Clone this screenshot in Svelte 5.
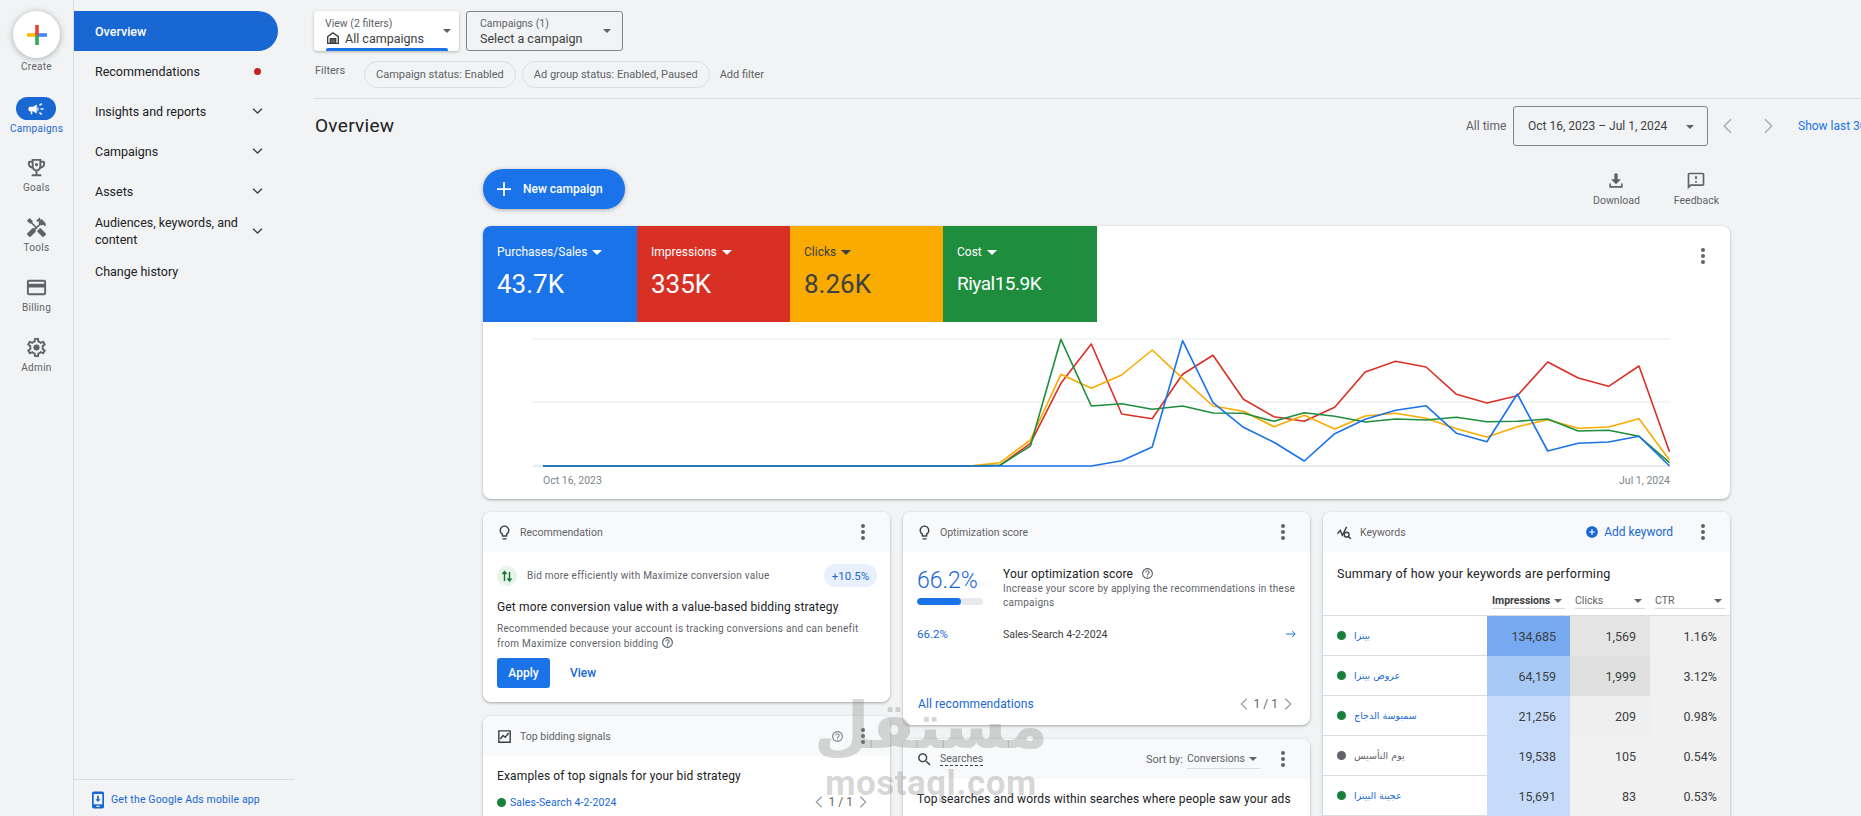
<script>
  const railItems = [
    { label: 'Goals', icon: 'goals' },
    { label: 'Tools', icon: 'tools' },
    { label: 'Billing', icon: 'billing' },
    { label: 'Admin', icon: 'admin' }
  ];

  const navItems = [
    { label: 'Recommendations', dot: true },
    { label: 'Insights and reports', chevron: true },
    { label: 'Campaigns', chevron: true },
    { label: 'Assets', chevron: true },
    { label: 'Audiences, keywords, and content', chevron: true, tight: true },
    { label: 'Change history' }
  ];

  const tiles = [
    { label: 'Purchases/Sales', value: '43.7K', cls: 'blue' },
    { label: 'Impressions', value: '335K', cls: 'red' },
    { label: 'Clicks', value: '8.26K', cls: 'yellow' },
    { label: 'Cost', value: 'Riyal15.9K', cls: 'green', small: true }
  ];

  // y readings per step, right part of the chart; everything before sits on the baseline
  const series = [
    { color: '#d93025', w: 1.6, ys: [436, 370, 190, 72, 282, 296, 163, 106, 238, 290, 304, 262, 156, 124, 141, 223, 249, 227, 126, 174, 199, 138, 395] },
    { color: '#f9ab00', w: 1.6, ys: [428, 360, 163, 205, 165, 90, 175, 258, 274, 320, 286, 327, 288, 280, 295, 326, 351, 320, 299, 325, 321, 296, 420] },
    { color: '#1e8e3e', w: 1.6, ys: [436, 378, 58, 258, 251, 268, 258, 279, 280, 304, 278, 289, 306, 297, 300, 292, 305, 304, 297, 333, 331, 349, 428] },
    { color: '#1a73e8', w: 1.6, ys: [438, 438, 438, 438, 422, 381, 62, 248, 322, 367, 423, 341, 298, 271, 257, 340, 365, 222, 393, 370, 366, 349, 438] }
  ];

  function points(ys) {
    const step = 30.43;
    const pts = ys.map((v, i) => `${(1000 + i * step).toFixed(1)},${(320 + v / 3).toFixed(1)}`);
    return `543,466 969,466 ${pts.join(' ')}`;
  }

  const keywords = [
    { name: 'بيتزا', paused: false, imp: '134,685', clicks: '1,569', ctr: '1.16%', impBg: '#76a9f0', clicksBg: '#e4e4e4' },
    { name: 'عروض بيتزا', paused: false, imp: '64,159', clicks: '1,999', ctr: '3.12%', impBg: '#a7c9f6', clicksBg: '#e0e0e0' },
    { name: 'سمبوسة الدجاج', paused: false, imp: '21,256', clicks: '209', ctr: '0.98%', impBg: '#c6dbf9', clicksBg: '#efefef' },
    { name: 'يوم التأسيس', paused: true, imp: '19,538', clicks: '105', ctr: '0.54%', impBg: '#c6dbf9', clicksBg: '#f1f1f1' },
    { name: 'عجينة البيتزا', paused: false, imp: '15,691', clicks: '83', ctr: '0.53%', impBg: '#c6dbf9', clicksBg: '#f1f1f1' }
  ];
</script>

{#snippet more()}
  <svg class="more" viewBox="0 0 24 24"><circle cx="12" cy="4" r="2.7"/><circle cx="12" cy="12" r="2.7"/><circle cx="12" cy="20" r="2.7"/></svg>
{/snippet}

{#snippet help(size)}
  <svg class="help" width={size} height={size} viewBox="0 0 24 24"><path d="M11 18h2v-2h-2v2zm1-16C6.48 2 2 6.48 2 12s4.48 10 10 10 10-4.48 10-10S17.52 2 12 2zm0 18c-4.41 0-8-3.59-8-8s3.59-8 8-8 8 3.59 8 8-3.59 8-8 8zm0-14c-2.21 0-4 1.79-4 4h2c0-1.1.9-2 2-2s2 .9 2 2c0 2-3 1.75-3 5h2c0-2.25 3-2.5 3-5 0-2.21-1.79-4-4-4z"/></svg>
{/snippet}

{#snippet bulb()}
  <svg class="head-icon" viewBox="0 0 24 24"><path d="M9 21c0 .55.45 1 1 1h4c.55 0 1-.45 1-1v-1H9v1zm3-19C8.14 2 5 5.14 5 9c0 2.38 1.19 4.47 3 5.74V17c0 .55.45 1 1 1h6c.55 0 1-.45 1-1v-2.26c1.81-1.27 3-3.36 3-5.74 0-3.86-3.14-7-7-7zm2.85 11.1l-.85.6V16h-4v-2.3l-.85-.6C7.8 12.16 7 10.63 7 9c0-2.76 2.24-5 5-5s5 2.24 5 5c0 1.63-.8 3.16-2.15 4.1z"/></svg>
{/snippet}

{#snippet pager()}
  <span class="pager">
    <svg viewBox="0 0 24 24"><path d="M16 4l-8 8 8 8"/></svg>
    <span>1 / 1</span>
    <svg viewBox="0 0 24 24"><path d="M8 4l8 8-8 8"/></svg>
  </span>
{/snippet}

<div class="page">
  <aside class="rail">
    <div class="create">
      <div class="create-btn">
        <svg width="20" height="20" viewBox="0 0 20 20">
          <rect x="0" y="8.2" width="10" height="3.6" fill="#fbbc04"/>
          <rect x="10" y="8.2" width="10" height="3.6" fill="#4285f4"/>
          <rect x="8.2" y="0" width="3.6" height="10" fill="#ea4335"/>
          <rect x="8.2" y="10" width="3.6" height="10" fill="#34a853"/>
        </svg>
      </div>
      <span class="rail-label">Create</span>
    </div>
    <div class="rail-item active">
      <span class="rail-pill">
        <svg viewBox="0 0 24 24"><path d="M18 11v2h4v-2h-4zm-2 6.61c.96.71 2.21 1.65 3.2 2.39.4-.53.8-1.07 1.2-1.6-.99-.74-2.24-1.68-3.2-2.4-.4.54-.8 1.08-1.2 1.61zM20.4 5.6c-.4-.53-.8-1.07-1.2-1.6-.99.74-2.24 1.68-3.2 2.4.4.53.8 1.07 1.2 1.6.96-.72 2.21-1.65 3.2-2.4zM4 9c-1.1 0-2 .9-2 2v2c0 1.1.9 2 2 2h1v4h2v-4h1l5 3V6L8 9H4zm11.5 3c0-1.33-.58-2.53-1.5-3.35v6.69c.92-.81 1.5-2.01 1.5-3.34z"/></svg>
      </span>
      <span class="rail-label">Campaigns</span>
    </div>
    {#each railItems as item}
      <div class="rail-item">
        <span class="rail-icon">
          <svg viewBox="0 0 24 24" width="23" height="23">
            {#if item.icon === 'goals'}
              <path fill-rule="evenodd" d="M19 5h-2V3H7v2H5c-1.1 0-2 .9-2 2v1c0 2.55 1.92 4.63 4.39 4.94.63 1.5 1.98 2.63 3.61 2.96V19H7v2h10v-2h-4v-3.1c1.63-.33 2.98-1.46 3.61-2.96C19.08 12.63 21 10.55 21 8V7c0-1.1-.9-2-2-2zM5 8V7h2v3.82C5.84 10.4 5 9.3 5 8zm14 0c0 1.3-.84 2.4-2 2.82V7h2v1zM15 5v6c0 1.65-1.35 3-3 3s-3-1.35-3-3V5h6z"/>
              <circle cx="12" cy="9" r="1.6"/>
            {:else if item.icon === 'tools'}
              <path d="M21.67 18.17l-5.3-5.3h-.99l-2.54 2.54v.99l5.3 5.3c.39.39 1.02.39 1.41 0l2.12-2.12c.39-.38.39-1.02 0-1.41z"/>
              <path d="M17.34 10.19l1.41-1.41 2.12 2.12c1.17-1.17 1.17-3.07 0-4.24l-3.54-3.54-1.41 1.41V2.22l-.7-.71-3.54 3.54.71.71h2.83l-1.41 1.41 1.06 1.06-2.89 2.89-4.13-4.13V5.06L4.83 2.04 2 4.87 5.03 7.9h1.41l4.13 4.13-.85.85H7.6l-5.3 5.3c-.39.39-.39 1.02 0 1.41l2.12 2.12c.39.39 1.02.39 1.41 0l5.3-5.3v-2.12l5.15-5.15 1.06 1.05z"/>
            {:else if item.icon === 'billing'}
              <path d="M20 4H4c-1.11 0-1.99.89-1.99 2L2 18c0 1.11.89 2 2 2h16c1.11 0 2-.89 2-2V6c0-1.11-.89-2-2-2zm0 14H4v-6h16v6zm0-10H4V6h16v2z"/>
            {:else}
              <path d="M19.43 12.98c.04-.32.07-.64.07-.98 0-.34-.03-.66-.07-.98l2.11-1.65c.19-.15.24-.42.12-.64l-2-3.46c-.09-.16-.26-.25-.44-.25-.06 0-.12.01-.17.03l-2.49 1c-.52-.4-1.08-.73-1.69-.98l-.38-2.65C14.46 2.18 14.25 2 14 2h-4c-.25 0-.46.18-.49.42l-.38 2.65c-.61.25-1.17.59-1.69.98l-2.49-1c-.06-.02-.12-.03-.18-.03-.17 0-.34.09-.43.25l-2 3.46c-.13.22-.07.49.12.64l2.11 1.65c-.04.32-.07.65-.07.98 0 .33.03.66.07.98l-2.11 1.65c-.19.15-.24.42-.12.64l2 3.46c.09.16.26.25.44.25.06 0 .12-.01.17-.03l2.49-1c.52.4 1.08.73 1.69.98l.38 2.65c.03.24.24.42.49.42h4c.25 0 .46-.18.49-.42l.38-2.65c.61-.25 1.17-.59 1.69-.98l2.49 1c.06.02.12.03.18.03.17 0 .34-.09.43-.25l2-3.46c.12-.22.07-.49-.12-.64l-2.11-1.65zm-1.98-1.71c.04.31.05.52.05.73 0 .21-.02.43-.05.73l-.14 1.13.89.7 1.08.84-.7 1.21-1.27-.51-1.04-.42-.9.68c-.43.32-.84.56-1.25.73l-1.06.43-.16 1.13-.2 1.35h-1.4l-.19-1.35-.16-1.13-1.06-.43c-.43-.18-.83-.41-1.23-.71l-.91-.7-1.06.43-1.27.51-.7-1.21 1.08-.84.89-.7-.14-1.13c-.03-.31-.05-.54-.05-.74s.02-.43.05-.73l.14-1.13-.89-.7-1.08-.84.7-1.21 1.27.51 1.04.42.9-.68c.43-.32.84-.56 1.25-.73l1.06-.43.16-1.13.2-1.35h1.39l.19 1.35.16 1.13 1.06.43c.43.18.83.41 1.23.71l.91.7 1.06-.43 1.27-.51.7 1.21-1.07.85-.89.7.14 1.13z"/>
              <circle cx="12" cy="12" r="3.2"/>
            {/if}
          </svg>
        </span>
        <span class="rail-label">{item.label}</span>
      </div>
    {/each}
  </aside>

  <nav class="side">
    <div class="nav-list">
      <div class="nav-item current">Overview</div>
      {#each navItems as item}
        <div class="nav-item" class:tight={item.tight}>
          <span class="nav-text">{item.label}</span>
          {#if item.dot}<span class="red-dot"></span>{/if}
          {#if item.chevron}
            <svg class="chev" viewBox="0 0 12 8"><path d="M1.2 1.5L6 6.2l4.8-4.7"/></svg>
          {/if}
        </div>
      {/each}
    </div>
    <div class="app-link">
      <svg width="12" height="18" viewBox="0 0 14 20"><path fill="#1967d2" d="M2 0h10a2 2 0 0 1 2 2v16a2 2 0 0 1-2 2H2a2 2 0 0 1-2-2V2a2 2 0 0 1 2-2z"/><rect x="2" y="3" width="10" height="12" fill="#f1f3f4"/><path fill="#1967d2" d="M6 5h2v4h2l-3 3.4L4 9h2z"/><rect x="5" y="16.6" width="4" height="1.4" fill="#f1f3f4"/></svg>
      <span>Get the Google Ads mobile app</span>
    </div>
  </nav>

  <main class="main">
    <div class="pickers">
      <div class="picker view">
        <span class="pick-label">View (2 filters)</span>
        <span class="pick-value">
          <svg width="16" height="16" viewBox="0 0 24 24"><path fill="#3c4043" fill-rule="evenodd" d="M12 3L3 9.5V21h18V9.5L12 3zm0 2.6l7 5V19h-2v-7H7v7H5v-8.4l7-5z"/><rect x="9" y="14" width="6" height="5" fill="#5f6368"/></svg>
          All campaigns
        </span>
        <span class="caret"></span>
        <span class="view-bar"></span>
      </div>
      <div class="picker outline">
        <span class="pick-label">Campaigns (1)</span>
        <span class="pick-value">Select a campaign</span>
        <span class="caret"></span>
      </div>
    </div>

    <div class="filters">
      <span class="filters-label">Filters</span>
      <span class="chip">Campaign status: Enabled</span>
      <span class="chip">Ad group status: Enabled, Paused</span>
      <span class="add-filter">Add filter</span>
    </div>

    <div class="title-row">
      <h1>Overview</h1>
      <div class="date-tools">
        <span class="all-time">All time</span>
        <div class="date-box">Oct 16, 2023 – Jul 1, 2024<span class="caret"></span></div>
        <svg class="date-arrow" viewBox="0 0 24 24"><path d="M16 3l-9 9 9 9"/></svg>
        <svg class="date-arrow" viewBox="0 0 24 24"><path d="M8 3l9 9-9 9"/></svg>
        <span class="show-last">Show last 30 days</span>
      </div>
    </div>

    <div class="content">
      <div class="action-row">
        <div class="new-campaign">
          <svg width="14" height="14" viewBox="0 0 16 16"><path d="M7 0h2v7h7v2H9v7H7V9H0V7h7z" fill="#fff"/></svg>
          New campaign
        </div>
        <div class="tools">
          <div class="tool">
            <svg viewBox="0 0 24 24" width="20" height="20"><path d="M10 3h4v7h4l-6 6-6-6h4zM4 15h2v3h12v-3h2v5H4z"/></svg>
            <span>Download</span>
          </div>
          <div class="tool">
            <svg viewBox="0 0 24 24" width="20" height="20"><path d="M20 2H4c-1.1 0-1.99.9-1.99 2L2 22l4-4h14c1.1 0 2-.9 2-2V4c0-1.1-.9-2-2-2zm0 14H5.17l-.59.59-.58.58V4h16v12zm-9-4h2v2h-2zm0-6h2v4h-2z"/></svg>
            <span>Feedback</span>
          </div>
        </div>
      </div>

      <section class="card chart-card">
        <div class="tiles">
          {#each tiles as t}
            <div class="tile {t.cls}">
              <span class="tile-label">{t.label}<i class="tile-caret"></i></span>
              <span class="tile-value" class:small={t.small}>{t.value}</span>
            </div>
          {/each}
          <span class="chart-more">{@render more()}</span>
        </div>
        <svg class="chart" viewBox="483 322 1247 177" width="1247" height="177">
          <line x1="533" x2="1670" y1="339" y2="339" stroke="#e8eaed"/>
          <line x1="533" x2="1670" y1="402" y2="402" stroke="#e8eaed"/>
          <line x1="533" x2="1670" y1="466" y2="466" stroke="#e8eaed" stroke-width="2"/>
          {#each series as s}
            <polyline points={points(s.ys)} fill="none" stroke={s.color} stroke-width={s.w} stroke-linejoin="round"/>
          {/each}
          <text x="543" y="484" class="axis">Oct 16, 2023</text>
          <text x="1670" y="484" class="axis" text-anchor="end">Jul 1, 2024</text>
        </svg>
      </section>

      <div class="columns">
        <div class="col">
          <section class="card rec">
            <header class="card-head">
              {@render bulb()}
              <span class="head-title">Recommendation</span>
              {@render more()}
            </header>
            <div class="rec-body">
              <div class="rec-line">
                <span class="swap">
                  <svg width="14" height="14" viewBox="0 0 14 14"><path d="M4.5 12V3M2.5 5l2-2.4 2 2.4" stroke="#137333" fill="none" stroke-width="1.4"/><path d="M9.5 3v9M7.5 9.5l2 2.4 2-2.4" stroke="#137333" fill="none" stroke-width="1.4"/></svg>
                </span>
                <span class="rec-line-text">Bid more efficiently with Maximize conversion value</span>
                <span class="uplift">+10.5%</span>
              </div>
              <div class="card-h">Get more conversion value with a value-based bidding strategy</div>
              <p class="rec-note">Recommended because your account is tracking conversions and can benefit from Maximize conversion bidding {@render help(13)}</p>
              <div class="rec-actions">
                <span class="apply">Apply</span>
                <span class="view-link">View</span>
              </div>
            </div>
          </section>
          <section class="card grow">
            <header class="card-head">
              <svg class="head-icon" viewBox="0 0 24 24"><path fill-rule="evenodd" d="M3 3h18v18H3zM5 5v14h14V5z"/><path d="M6 15.5l4-5 3 2.6 5-6" fill="none" stroke="#3c4043" stroke-width="2"/></svg>
              <span class="head-title">Top bidding signals</span>
              {@render help(13)}
              {@render more()}
            </header>
            <div class="signals">
              <div class="card-h">Examples of top signals for your bid strategy</div>
              <div class="signal-row">
                <span class="status-dot"></span>
                <span class="link">Sales-Search 4-2-2024</span>
                {@render pager()}
              </div>
            </div>
          </section>
        </div>

        <div class="col">
          <section class="card score">
            <header class="card-head">
              {@render bulb()}
              <span class="head-title">Optimization score</span>
              {@render more()}
            </header>
            <div class="score-body">
              <div class="score-top">
                <div class="score-num">
                  <span class="big-pct">66.2%</span>
                  <span class="bar"><span class="bar-fill" style="width: 66.2%"></span></span>
                </div>
                <div class="score-text">
                  <div class="card-h">Your optimization score <span class="q">{@render help(13)}</span></div>
                  <p class="rec-note">Increase your score by applying the recommendations in these campaigns</p>
                </div>
              </div>
              <div class="score-row">
                <span class="score-small">66.2%</span>
                <span class="score-camp">Sales-Search 4-2-2024</span>
                <svg width="10" height="10" viewBox="0 0 12 12"><path d="M0 6h11M7.5 2.5L11 6l-3.5 3.5" fill="none" stroke="#1a73e8" stroke-width="1.2"/></svg>
              </div>
              <div class="score-foot">
                <span class="link all">All recommendations</span>
                {@render pager()}
              </div>
            </div>
          </section>
          <section class="card grow">
            <header class="card-head">
              <svg class="head-icon search" viewBox="0 0 24 24"><path d="M15.5 14h-.79l-.28-.27C15.41 12.59 16 11.11 16 9.5 16 5.91 13.09 3 9.5 3S3 5.91 3 9.5 5.91 16 9.5 16c1.61 0 3.09-.59 4.23-1.57l.27.28v.79l5 4.99L20.49 19l-4.99-5zm-6 0C7.01 14 5 11.99 5 9.5S7.01 5 9.5 5 14 7.01 14 9.5 11.99 14 9.5 14z"/></svg>
              <span class="head-title dashed">Searches</span>
              <span class="sort">Sort by:</span>
              <span class="sort-select">Conversions<span class="caret"></span></span>
              {@render more()}
            </header>
            <div class="signals">
              <div class="card-h">Top searches and words within searches where people saw your ads</div>
            </div>
          </section>
        </div>

        <div class="col">
          <section class="card grow">
            <header class="card-head">
              <svg class="head-icon kw" viewBox="0 0 24 24"><path d="M2 14l4-5 3 7 6-12" fill="none" stroke="#3c4043" stroke-width="2"/><circle cx="15" cy="15" r="3.4" fill="none" stroke="#3c4043" stroke-width="2"/><path d="M17.5 17.5l3.5 3.5" stroke="#3c4043" stroke-width="2"/></svg>
              <span class="head-title">Keywords</span>
              <span class="add-kw">
                <svg width="14" height="14" viewBox="0 0 24 24"><path fill="#1967d2" d="M12 2C6.48 2 2 6.48 2 12s4.48 10 10 10 10-4.48 10-10S17.52 2 12 2zm5 11h-4v4h-2v-4H7v-2h4V7h2v4h4v2z"/></svg>
                Add keyword
              </span>
              {@render more()}
            </header>
            <div class="kw-title">Summary of how your keywords are performing</div>
            <div class="kw-table">
              <div class="kw-head">
                <span></span>
                <span class="kw-th strong">Impressions<span class="caret"></span></span>
                <span class="kw-th">Clicks<span class="caret"></span></span>
                <span class="kw-th">CTR<span class="caret"></span></span>
              </div>
              {#each keywords as k}
                <div class="kw-row">
                  <span class="kw-name">
                    {#if k.paused}
                      <span class="status-dot paused"></span>
                    {:else}
                      <span class="status-dot"></span>
                    {/if}
                    <span class="kw-link" class:paused-link={k.paused} dir="rtl">{k.name}</span>
                  </span>
                  <span class="num" style="background: {k.impBg}">{k.imp}</span>
                  <span class="num" style="background: {k.clicksBg}">{k.clicks}</span>
                  <span class="num ctr">{k.ctr}</span>
                </div>
              {/each}
            </div>
          </section>
        </div>
      </div>
    </div>
  </main>

  <div class="watermark" aria-hidden="true">
    <span class="wm-ar" dir="rtl">مستقل</span>
    <span class="wm-en">mostaql.com</span>
  </div>
</div>

<style>
  :global(html), :global(body) {
    margin: 0;
    overflow: hidden;
  }

  .page {
    position: relative;
    display: flex;
    width: 1861px;
    height: 816px;
    overflow: hidden;
    background: #f1f3f4;
    color: #3c4043;
    font-family: Roboto, "Liberation Sans", sans-serif;
    font-size: 12px;
  }

  /* icon rail */
  .rail {
    flex: 0 0 73px;
    border-right: 1px solid #dadce0;
    display: flex;
    flex-direction: column;
    align-items: center;
  }

  .rail svg {
    fill: #5f6368;
  }

  .create {
    display: flex;
    flex-direction: column;
    align-items: center;
    padding-top: 11px;
    height: 84px;
    box-sizing: border-box;
  }

  .create-btn {
    width: 47px;
    height: 47px;
    border-radius: 50%;
    background: #fff;
    box-shadow: 0 1px 6px rgba(60, 64, 67, 0.4);
    display: flex;
    align-items: center;
    justify-content: center;
    margin-bottom: 2px;
  }

  .rail-label {
    font-size: 10px;
    line-height: 14px;
    color: #5f6368;
    letter-spacing: 0.3px;
  }

  .rail-item {
    height: 60px;
    flex-shrink: 0;
    display: flex;
    flex-direction: column;
    align-items: center;
    gap: 1px;
    padding-top: 13px;
    box-sizing: border-box;
  }

  .rail-item.active {
    height: 58px;
    gap: 2px;
  }

  .rail-item.active .rail-label {
    color: #1967d2;
  }

  .rail-pill {
    width: 40px;
    height: 23px;
    border-radius: 12px;
    background: #1967d2;
    display: flex;
    align-items: center;
    justify-content: center;
  }

  .rail-pill svg {
    fill: #fff;
    width: 18px;
    height: 18px;
  }

  .rail-icon {
    height: 25px;
    display: flex;
    align-items: center;
    justify-content: center;
  }

  /* text nav */
  .side {
    flex: 0 0 220px;
    display: flex;
    flex-direction: column;
    justify-content: space-between;
  }

  .nav-list {
    padding-top: 11px;
  }

  .nav-item {
    width: 204px;
    height: 40px;
    box-sizing: border-box;
    padding: 0 15px 0 21px;
    display: flex;
    align-items: center;
    justify-content: space-between;
    font-size: 12.5px;
    color: #202124;
  }

  .nav-item.current {
    background: #1967d2;
    color: #fff;
    font-weight: 500;
    border-radius: 0 20px 20px 0;
  }

  .nav-item.tight {
    line-height: 17px;
  }

  .nav-text {
    max-width: 155px;
  }

  .red-dot {
    width: 7px;
    height: 7px;
    border-radius: 50%;
    background: #c5221f;
    margin-right: 2px;
  }

  .chev {
    width: 11px;
    height: 8px;
    fill: none;
    stroke: #3c4043;
    stroke-width: 1.5;
  }

  .app-link {
    height: 37px;
    box-sizing: border-box;
    border-top: 1px solid #dadce0;
    display: flex;
    align-items: center;
    gap: 7px;
    padding: 3px 0 0 18px;
    color: #1967d2;
    font-size: 10.5px;
    letter-spacing: 0.15px;
  }

  /* main column */
  .main {
    flex: 1;
    min-width: 0;
    padding-left: 20px;
  }

  .pickers {
    display: flex;
    gap: 7px;
    padding-top: 11px;
  }

  .picker {
    position: relative;
    height: 40px;
    box-sizing: border-box;
    display: flex;
    flex-direction: column;
    justify-content: center;
    border-radius: 3px;
    padding-top: 1px;
  }

  .picker.view {
    width: 145px;
    background: #fff;
    padding-left: 11px;
    box-shadow: 0 1px 3px rgba(60, 64, 67, 0.35);
  }

  .picker.outline {
    width: 157px;
    border: 1px solid #80868b;
    padding-left: 13px;
  }

  .pick-label {
    font-size: 10.5px;
    line-height: 13px;
    color: #5f6368;
  }

  .pick-value {
    display: flex;
    align-items: center;
    gap: 4px;
    font-size: 12.5px;
    line-height: 17px;
    color: #3c4043;
  }

  .caret {
    width: 0;
    height: 0;
    border-left: 4.5px solid transparent;
    border-right: 4.5px solid transparent;
    border-top: 4.5px solid #5f6368;
  }

  .picker .caret {
    position: absolute;
    right: 8px;
    top: 18px;
  }

  .picker.outline .caret {
    right: 11px;
    top: 17px;
  }

  .view-bar {
    position: absolute;
    left: 12px;
    right: 11px;
    bottom: 0;
    height: 3px;
    background: #1a73e8;
    border-radius: 2px 2px 0 0;
  }

  .filters {
    display: flex;
    align-items: center;
    height: 48px;
    border-bottom: 1px solid #dadce0;
    box-sizing: border-box;
    padding: 0 0 0 1px;
    font-size: 11px;
    color: #5f6368;
  }

  .filters-label {
    width: 49px;
    margin-top: -9px;
  }

  .chip {
    height: 27px;
    display: flex;
    align-items: center;
    border: 1px solid #dadce0;
    border-radius: 14px;
    padding: 0 11px;
    margin-right: 6px;
    box-sizing: border-box;
    color: #5f6368;
  }

  .add-filter {
    margin-left: 4px;
    color: #5f6368;
  }

  .title-row {
    height: 54px;
    display: flex;
    align-items: center;
    justify-content: space-between;
  }

  h1 {
    margin: -1px 0 0;
    padding-left: 1px;
    font-size: 19px;
    font-weight: 400;
    color: #202124;
    letter-spacing: 0.3px;
  }

  .date-tools {
    display: flex;
    align-items: center;
    flex: 0 0 395px;
    overflow: hidden;
    white-space: nowrap;
  }

  .date-tools > * {
    flex-shrink: 0;
  }

  .all-time {
    width: 47px;
    color: #5f6368;
  }

  .date-box {
    position: relative;
    width: 195px;
    height: 40px;
    box-sizing: border-box;
    border: 1px solid #80868b;
    border-radius: 3px;
    display: flex;
    align-items: center;
    padding-left: 14px;
    color: #3c4043;
  }

  .date-box .caret {
    position: absolute;
    right: 13px;
    top: 18px;
  }

  .date-arrow {
    width: 18px;
    height: 18px;
    fill: none;
    stroke: #aab2ba;
    stroke-width: 2.2;
    margin-left: 11px;
    margin-right: 11px;
  }

  .show-last {
    color: #1a73e8;
    margin-left: 10px;
  }

  .content {
    margin-left: 169px;
    width: 1247px;
  }

  .action-row {
    height: 73px;
    padding-top: 16px;
    box-sizing: border-box;
    display: flex;
    justify-content: space-between;
    align-items: flex-start;
  }

  .new-campaign {
    width: 142px;
    height: 40px;
    border-radius: 20px;
    background: #1a73e8;
    color: #fff;
    font-weight: 500;
    font-size: 12px;
    display: flex;
    align-items: center;
    gap: 12px;
    padding-left: 14px;
    box-sizing: border-box;
    box-shadow: 0 1px 4px rgba(60, 64, 67, 0.4);
  }

  .tools {
    display: flex;
    gap: 34px;
    margin-right: 11px;
    margin-top: 2px;
  }

  .tool {
    display: flex;
    flex-direction: column;
    align-items: center;
    gap: 3px;
    font-size: 10.5px;
    color: #5f6368;
  }

  .tool svg {
    fill: #5f6368;
  }

  /* cards */
  .card {
    background: #fff;
    border-radius: 8px;
    box-shadow: 0 1px 2px rgba(60, 64, 67, 0.3), 0 1px 3px 1px rgba(60, 64, 67, 0.1);
    overflow: hidden;
  }

  .chart-card {
    height: 273px;
  }

  .tiles {
    position: relative;
    display: flex;
    height: 96px;
  }

  .tile {
    width: 154px;
    box-sizing: border-box;
    padding: 18px 14px 0;
    display: flex;
    flex-direction: column;
    color: #fff;
  }

  .tile.blue { background: #1a73e8; }
  .tile.red { background: #d93025; width: 153px; }
  .tile.yellow { background: #f9ab00; color: #3c4043; width: 153px; }
  .tile.green { background: #1e8e3e; }

  .tile-label {
    display: flex;
    align-items: center;
    gap: 5px;
    font-size: 12px;
    line-height: 17px;
  }

  .tile-caret {
    width: 0;
    height: 0;
    border-left: 5px solid transparent;
    border-right: 5px solid transparent;
    border-top: 5px solid currentColor;
  }

  .tile-value {
    font-size: 26px;
    line-height: 34px;
    margin-top: 6px;
  }

  .tile-value.small {
    font-size: 19px;
    letter-spacing: -0.5px;
  }

  .chart-more {
    position: absolute;
    right: 18px;
    top: 21px;
  }

  .chart {
    display: block;
  }

  .axis {
    font-size: 10.5px;
    fill: #80868b;
  }

  .columns {
    display: flex;
    gap: 13px;
    margin-top: 13px;
  }

  .col {
    flex: 0 0 407px;
    display: flex;
    flex-direction: column;
    gap: 14px;
    height: 400px;
  }

  .grow {
    flex: 1;
  }

  .card-head {
    height: 40px;
    background: #f8f9fa;
    display: flex;
    align-items: center;
    padding: 0 18px 0 13px;
    box-sizing: border-box;
  }

  .head-icon {
    width: 17px;
    height: 17px;
    fill: #3c4043;
    margin-right: 7px;
    flex-shrink: 0;
  }

  .head-title {
    font-size: 10.5px;
    color: #5f6368;
    margin-right: auto;
  }

  .head-title.dashed {
    border-bottom: 1px dashed #3c4043;
    line-height: 13px;
  }

  .more {
    width: 18px;
    height: 18px;
    fill: #5f6368;
    flex-shrink: 0;
    display: block;
  }

  .help {
    fill: #5f6368;
    vertical-align: -2px;
  }

  .card-head .help {
    fill: #80868b;
    margin-right: 10px;
  }

  .q {
    margin-left: 5px;
  }

  .card-h {
    font-size: 12px;
    color: #202124;
    line-height: 17px;
    letter-spacing: 0.15px;
  }

  .rec {
    height: 190px;
    flex-shrink: 0;
  }

  .rec-body {
    padding: 12px 13px 0 14px;
  }

  .rec-line {
    display: flex;
    align-items: center;
    gap: 10px;
    height: 23px;
    margin-bottom: 12px;
  }

  .swap {
    width: 20px;
    height: 20px;
    border-radius: 50%;
    background: #e6f4ea;
    display: flex;
    align-items: center;
    justify-content: center;
  }

  .rec-line-text {
    font-size: 10px;
    color: #5f6368;
    margin-right: auto;
    letter-spacing: 0.25px;
  }

  .uplift {
    width: 53px;
    height: 23px;
    border-radius: 12px;
    background: #e8f0fe;
    color: #1967d2;
    font-size: 11.5px;
    display: flex;
    align-items: center;
    justify-content: center;
  }

  .rec-note {
    margin: 5px 0 0;
    font-size: 10px;
    line-height: 15px;
    color: #5f6368;
    letter-spacing: 0.25px;
  }

  .rec-actions {
    display: flex;
    align-items: center;
    gap: 20px;
    margin-top: 7px;
  }

  .apply {
    width: 53px;
    height: 30px;
    border-radius: 3px;
    background: #1a73e8;
    color: #fff;
    font-weight: 500;
    font-size: 12px;
    display: flex;
    align-items: center;
    justify-content: center;
  }

  .view-link {
    color: #1967d2;
    font-size: 12px;
    font-weight: 500;
  }

  .signals {
    padding: 12px 14px;
  }

  .signal-row {
    display: flex;
    align-items: center;
    gap: 4px;
    margin-top: 9px;
    padding-right: 5px;
  }

  .link {
    color: #1967d2;
    font-size: 10.5px;
    letter-spacing: 0.1px;
  }

  .status-dot {
    width: 9px;
    height: 9px;
    border-radius: 50%;
    background: #188038;
    flex-shrink: 0;
  }

  .status-dot.paused {
    background: #5f6368;
  }

  .pager {
    display: flex;
    align-items: center;
    gap: 2px;
    margin-left: auto;
    font-size: 12px;
    color: #5f6368;
  }

  .pager svg {
    width: 16px;
    height: 16px;
    fill: none;
    stroke: #9aa0a6;
    stroke-width: 2;
  }

  .score {
    height: 213px;
    flex-shrink: 0;
    display: flex;
    flex-direction: column;
  }

  .score-body {
    flex: 1;
    padding: 14px 14px 13px;
    display: flex;
    flex-direction: column;
  }

  .score-top {
    display: flex;
  }

  .score-num {
    flex: 0 0 86px;
    display: flex;
    flex-direction: column;
  }

  .score-text {
    flex: 1;
    margin-right: -3px;
  }

  .big-pct {
    font-size: 23px;
    line-height: 30px;
    color: #1967d2;
    font-weight: 300;
  }

  .bar {
    display: block;
    width: 66px;
    height: 7px;
    border-radius: 4px;
    background: #e8eaed;
    margin-top: 2px;
    overflow: hidden;
  }

  .bar-fill {
    display: block;
    height: 100%;
    background: #1a73e8;
    border-radius: 4px;
  }

  .score-text .rec-note {
    margin-top: -1px;
    line-height: 14px;
  }

  .score-row {
    display: flex;
    align-items: center;
    margin-top: 17px;
    font-size: 10.5px;
  }

  .score-small {
    width: 86px;
    color: #1967d2;
    font-size: 11.5px;
  }

  .score-camp {
    color: #3c4043;
    margin-right: auto;
  }

  .score-foot {
    display: flex;
    align-items: center;
    margin-top: auto;
  }

  .all {
    font-size: 12px;
    margin-left: 1px;
  }

  .sort {
    font-size: 11px;
    color: #5f6368;
    margin-right: 4px;
  }

  .sort-select {
    display: flex;
    align-items: center;
    justify-content: space-between;
    width: 73px;
    font-size: 10.5px;
    color: #5f6368;
    border-bottom: 1px solid #dadce0;
    height: 20px;
    margin-right: 14px;
    padding-right: 3px;
    box-sizing: border-box;
  }

  .add-kw {
    display: flex;
    align-items: center;
    gap: 5px;
    color: #1967d2;
    font-size: 12px;
    margin-right: 21px;
  }

  .kw-title {
    padding: 14px 14px 0;
    font-size: 12.5px;
    color: #202124;
    line-height: 16px;
    letter-spacing: 0.25px;
  }

  .kw-table {
    margin-top: 8px;
  }

  .kw-head,
  .kw-row {
    display: grid;
    grid-template-columns: 164px 83px 80px 80px;
  }

  .kw-head {
    height: 26px;
    border-bottom: 1px solid #dadce0;
    box-sizing: border-box;
  }

  .kw-th {
    display: flex;
    align-items: center;
    justify-content: space-between;
    height: 19px;
    box-sizing: border-box;
    padding: 3px 3px 0 0;
    margin: 0 5px;
    border-bottom: 1px solid #dadce0;
    font-size: 10.5px;
    color: #5f6368;
  }

  .kw-th.strong {
    color: #3c4043;
    font-weight: 700;
  }

  .kw-row {
    height: 40px;
  }

  .kw-name {
    display: flex;
    align-items: center;
    gap: 8px;
    padding-left: 14px;
    border-bottom: 1px solid #dadce0;
    box-sizing: border-box;
  }

  .kw-link {
    font-family: "DejaVu Sans", sans-serif;
    font-size: 9.5px;
    color: #1967d2;
  }

  .kw-link.paused-link {
    color: #5f6368;
  }

  .num {
    display: flex;
    align-items: center;
    justify-content: flex-end;
    padding-right: 14px;
    font-size: 12.5px;
    color: #3c4043;
  }

  .ctr {
    background: #f1f1f1;
    padding-right: 13px;
  }

  /* stock-photo style overlay */
  .watermark {
    position: absolute;
    left: 825px;
    top: 694px;
    width: 212px;
    display: flex;
    flex-direction: column;
    align-items: center;
    color: rgba(130, 130, 130, 0.32);
    pointer-events: none;
    font-weight: 700;
    line-height: 1;
  }

  .wm-ar {
    font-family: "DejaVu Sans", sans-serif;
    font-size: 64px;
    height: 72px;
  }

  .wm-en {
    font-family: Roboto, sans-serif;
    font-size: 35px;
    letter-spacing: 0.5px;
  }
</style>
